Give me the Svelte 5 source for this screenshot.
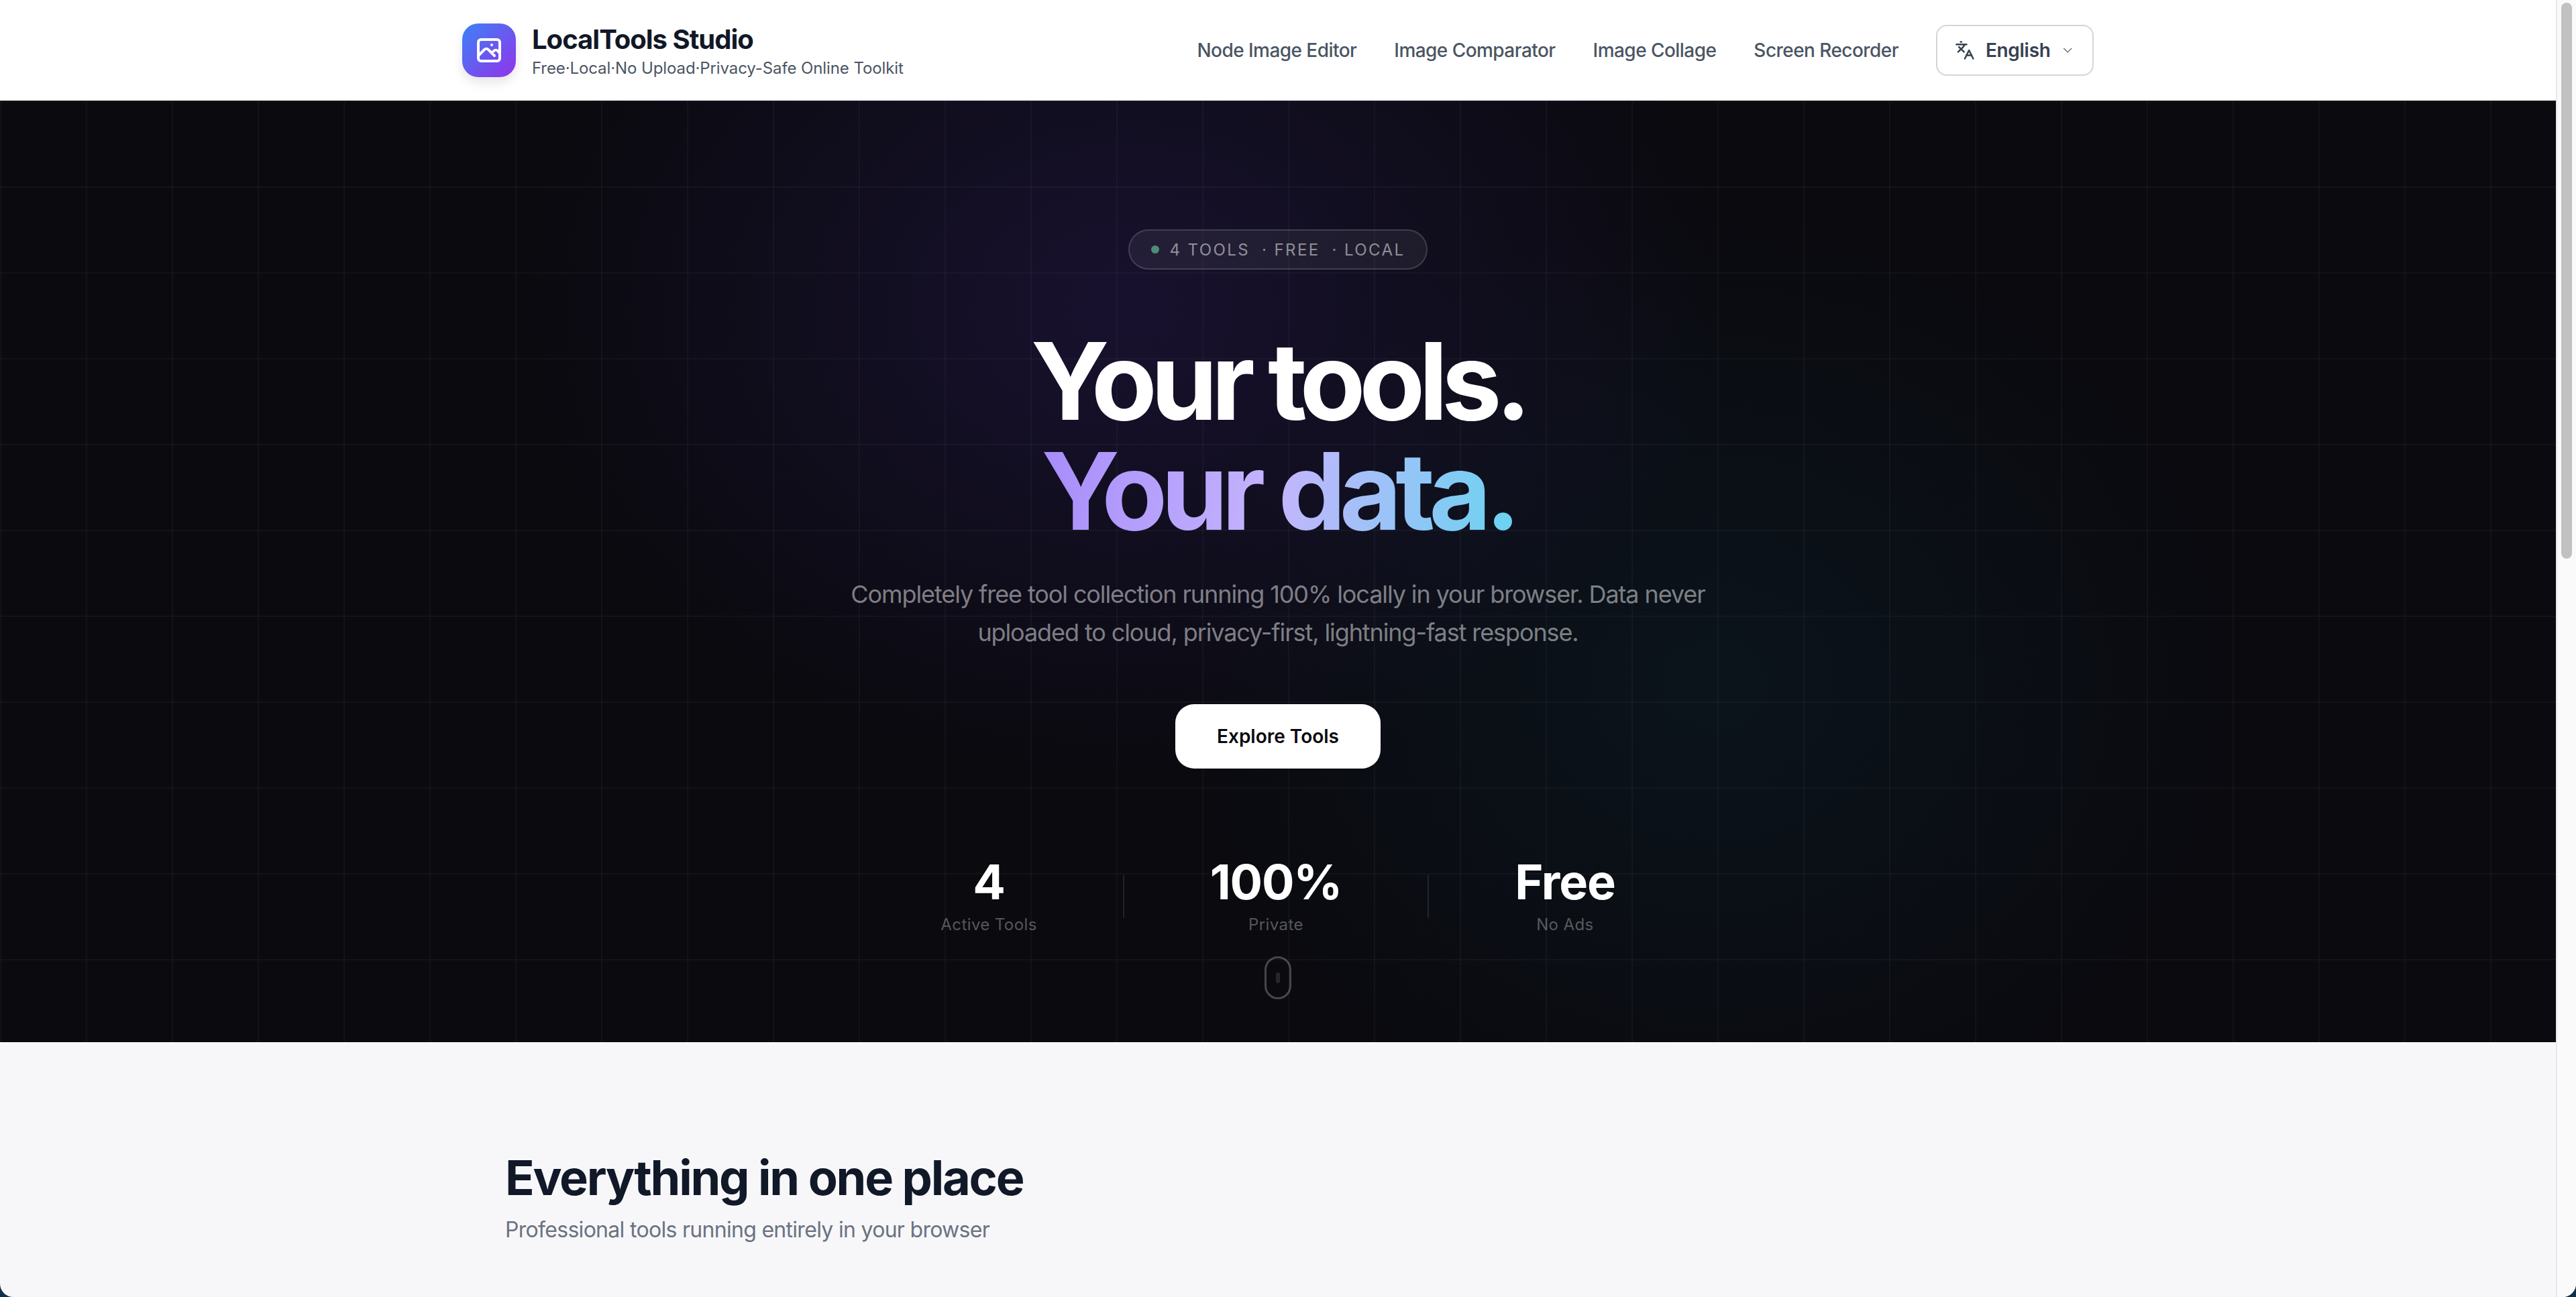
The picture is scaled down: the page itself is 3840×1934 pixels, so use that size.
<script lang="ts">
  const navLinks = ["Node Image Editor", "Image Comparator", "Image Collage", "Screen Recorder"];
  const stats = [
    { value: "4", label: "Active Tools" },
    { value: "100%", label: "Private" },
    { value: "Free", label: "No Ads" }
  ];
</script>

<div class="window">
  <div class="page">
    <header class="topbar">
      <div class="topbar-inner">
        <div class="brand">
          <div class="logo">
            <svg viewBox="0 0 24 24" width="48" height="48" fill="none" stroke="white" stroke-width="2" stroke-linecap="round" stroke-linejoin="round">
              <path d="M4 16l4.586-4.586a2 2 0 012.828 0L16 16m-2-2l1.586-1.586a2 2 0 012.828 0L20 14m-6-6h.01M6 20h12a2 2 0 002-2V6a2 2 0 00-2-2H6a2 2 0 00-2 2v12a2 2 0 002 2z" />
            </svg>
          </div>
          <div class="brand-text">
            <div class="brand-name">LocalTools Studio</div>
            <div class="brand-tag">Free·Local·No Upload·Privacy-Safe Online Toolkit</div>
          </div>
        </div>
        <nav class="nav">
          {#each navLinks as link}
            <a href="#top">{link}</a>
          {/each}
          <button class="lang">
            <svg viewBox="0 0 24 24" width="32" height="32" fill="none" stroke="currentColor" stroke-width="2" stroke-linecap="round" stroke-linejoin="round">
              <path d="m5 8 6 6" />
              <path d="m4 14 6-6 2-3" />
              <path d="M2 5h12" />
              <path d="M7 2h1" />
              <path d="m22 22-5-10-5 10" />
              <path d="M14 18h6" />
            </svg>
            <span>English</span>
            <svg class="chev" viewBox="0 0 24 24" width="24" height="24" fill="none" stroke="currentColor" stroke-width="1.5" stroke-linecap="round" stroke-linejoin="round">
              <path d="m6 9 6 6 6-6" />
            </svg>
          </button>
        </nav>
      </div>
    </header>

    <section class="hero">
      <div class="badge">
        <span class="dot"></span>
        <span>4 TOOLS</span>
        <span class="sep">· FREE</span>
        <span class="sep">· LOCAL</span>
      </div>
      <h1>Your tools.<br /><span class="grad">Your data.</span></h1>
      <p class="lead">Completely free tool collection running 100% locally in your browser. Data never uploaded to cloud, privacy-first, lightning-fast response.</p>
      <button class="cta">Explore Tools</button>
      <div class="stats">
        {#each stats as stat, i}
          {#if i > 0}<div class="divider"></div>{/if}
          <div class="stat">
            <div class="stat-value">{stat.value}</div>
            <div class="stat-label">{stat.label}</div>
          </div>
        {/each}
      </div>
      <div class="mouse"><span></span></div>
    </section>

    <section class="tools">
      <h2>Everything in one place</h2>
      <p>Professional tools running entirely in your browser</p>
    </section>
  </div>

  <aside class="scrollbar"><div class="thumb"></div></aside>
</div>

<style>
  :global(body) {
    background: #10304c;
    overflow: hidden;
  }

  .window {
    display: flex;
    height: 1934px;
    overflow: hidden;
    border-radius: 0 0 20px 20px;
    font-family: Inter, "Liberation Sans", sans-serif;
    background: #f7f7fa;
  }

  .page {
    flex: 1;
    min-width: 0;
  }

  .scrollbar {
    width: 30px;
    box-sizing: border-box;
    border-left: 2px solid #e8e8e8;
    background: #fafafa;
    padding: 4px 0 0 6px;
    flex-shrink: 0;
  }

  .thumb {
    width: 16px;
    height: 829px;
    border-radius: 8px;
    background: #c1c1c1;
  }

  .topbar {
    height: 150px;
    background: #fff;
  }

  .topbar-inner {
    max-width: 2432px;
    height: 100%;
    margin: 0 auto;
    display: flex;
    align-items: center;
    justify-content: space-between;
  }

  .brand {
    display: flex;
    align-items: center;
    gap: 24px;
  }

  .logo {
    width: 80px;
    height: 80px;
    border-radius: 24px;
    background: linear-gradient(135deg, #3b82f6, #9333ea);
    box-shadow: 0 8px 16px rgba(0, 0, 0, 0.1);
    display: flex;
    align-items: center;
    justify-content: center;
  }

  .brand-text {
    padding-top: 2px;
  }

  .brand-name {
    font-size: 40px;
    line-height: 48px;
    font-weight: 700;
    letter-spacing: -1px;
    color: #111827;
  }

  .brand-tag {
    font-size: 24px;
    line-height: 32px;
    letter-spacing: -0.1px;
    color: #4b5563;
    margin-top: 3px;
  }

  .nav {
    display: flex;
    align-items: center;
    gap: 56px;
  }

  .nav a {
    font-size: 28px;
    font-weight: 500;
    letter-spacing: -0.55px;
    color: #4b5563;
    text-decoration: none;
  }

  .lang {
    height: 76px;
    width: 235px;
    display: flex;
    align-items: center;
    padding: 0 26px;
    border: 2px solid #d1d5db;
    border-radius: 16px;
    background: #fff;
    color: #374151;
    font: inherit;
    font-size: 28px;
    font-weight: 600;
    letter-spacing: -0.3px;
  }

  .lang span {
    margin-left: 16px;
  }

  .chev {
    margin-left: 14px;
    color: #6b7280;
  }

  .hero {
    position: relative;
    height: 1404px;
    box-sizing: border-box;
    padding-top: 192px;
    display: flex;
    flex-direction: column;
    align-items: center;
    background-color: #0a0a0f;
    background-image:
      linear-gradient(rgba(255, 255, 255, 0.03) 2px, transparent 2px),
      linear-gradient(90deg, rgba(255, 255, 255, 0.03) 2px, transparent 2px),
      radial-gradient(ellipse 900px 700px at 44% 22%, rgba(88, 50, 190, 0.18), transparent 100%),
      radial-gradient(ellipse 800px 700px at 67% 62%, rgba(20, 90, 120, 0.12), transparent 100%);
    background-size: 128px 128px, 128px 128px, 100% 100%, 100% 100%;
  }

  .badge {
    height: 60px;
    box-sizing: border-box;
    display: flex;
    align-items: center;
    padding: 0 32px;
    border: 2px solid rgba(255, 255, 255, 0.15);
    border-radius: 30px;
    background: rgba(255, 255, 255, 0.06);
    font-size: 24px;
    letter-spacing: 2.4px;
    color: rgba(255, 255, 255, 0.5);
  }

  .dot {
    width: 12px;
    height: 12px;
    border-radius: 50%;
    background: #4e8c74;
    margin-right: 16px;
  }

  .sep {
    margin-left: 18px;
  }

  h1 {
    margin: 84px 0 0;
    font-size: 160px;
    line-height: 164px;
    font-weight: 700;
    letter-spacing: -9.4px;
    text-align: center;
    color: #fff;
  }

  .grad {
    background: linear-gradient(100deg, #a78bfa, #c4b5fd 50%, #67d4f0);
    -webkit-background-clip: text;
    background-clip: text;
    color: transparent;
  }

  .lead {
    margin: 44px 0 0;
    width: 1344px;
    font-size: 36px;
    line-height: 57px;
    letter-spacing: -1.1px;
    text-align: center;
    color: rgba(255, 255, 255, 0.48);
  }

  .cta {
    margin-top: 78px;
    width: 306px;
    height: 96px;
    border: none;
    border-radius: 28px;
    background: #fff;
    color: #0a0a0f;
    font: inherit;
    font-size: 28px;
    font-weight: 600;
  }

  .stats {
    margin-top: 133px;
    display: flex;
    align-items: center;
    gap: 128px;
  }

  .stat {
    text-align: center;
  }

  .stat-value {
    font-size: 72px;
    line-height: 72px;
    font-weight: 700;
    letter-spacing: -1.2px;
    color: #fff;
  }

  .stat-label {
    margin-top: 12px;
    font-size: 24px;
    line-height: 32px;
    letter-spacing: 0.4px;
    color: rgba(255, 255, 255, 0.33);
  }

  .divider {
    width: 2px;
    height: 64px;
    background: rgba(255, 255, 255, 0.1);
  }

  .mouse {
    position: absolute;
    left: 50%;
    bottom: 64px;
    transform: translateX(-50%);
    width: 40px;
    height: 64px;
    box-sizing: border-box;
    border: 3px solid rgba(255, 255, 255, 0.25);
    border-radius: 20px;
    display: flex;
    align-items: center;
    justify-content: center;
  }

  .mouse span {
    width: 6px;
    height: 16px;
    border-radius: 3px;
    background: rgba(255, 255, 255, 0.12);
  }

  .tools {
    box-sizing: border-box;
    max-width: 2432px;
    margin: 0 auto;
    padding: 162px 64px 0;
  }

  h2 {
    margin: 0;
    font-size: 72px;
    line-height: 80px;
    font-weight: 700;
    letter-spacing: -2.25px;
    color: #111827;
  }

  .tools p {
    margin: 14px 0 0;
    font-size: 32px;
    line-height: 48px;
    letter-spacing: -0.7px;
    color: #6b7280;
  }
</style>
